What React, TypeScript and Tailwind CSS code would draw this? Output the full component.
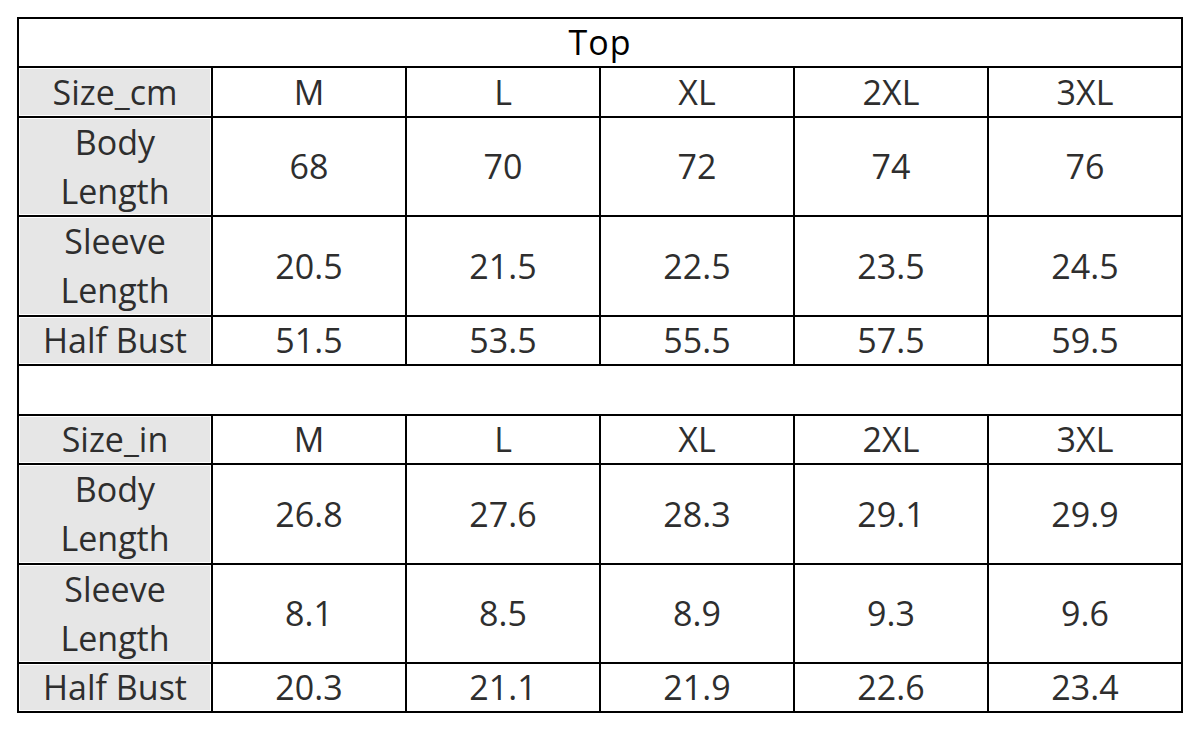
const rowsCm = [
  { label: ['Body', 'Length'], h: 'h-[97px]', values: ['68', '70', '72', '74', '76'] },
  { label: ['Sleeve', 'Length'], h: 'h-[98px]', values: ['20.5', '21.5', '22.5', '23.5', '24.5'] },
  { label: ['Half Bust'], h: 'h-[47px]', values: ['51.5', '53.5', '55.5', '57.5', '59.5'] },
];

const rowsIn = [
  { label: ['Body', 'Length'], h: 'h-[98px]', values: ['26.8', '27.6', '28.3', '29.1', '29.9'] },
  { label: ['Sleeve', 'Length'], h: 'h-[97px]', values: ['8.1', '8.5', '8.9', '9.3', '9.6'] },
  { label: ['Half Bust'], h: 'h-[47px]', values: ['20.3', '21.1', '21.9', '22.6', '23.4'] },
];

const sizes = ['M', 'L', 'XL', '2XL', '3XL'];

function LabelCell({ lines, h }: { lines: string[]; h: string }) {
  return (
    <div
      className={`${h} bg-[#e6e6e6] shadow-[inset_0_0_0_1px_#fff] flex flex-col items-center justify-center leading-[49px]`}
    >
      {lines.map((l) => (
        <span key={l}>{l}</span>
      ))}
    </div>
  );
}

function ValueCell({ value, h }: { value: string; h: string }) {
  return <div className={`${h} bg-white flex items-center justify-center`}>{value}</div>;
}

function Block({ unit, sizeH, rows }: { unit: string; sizeH: string; rows: typeof rowsCm }) {
  return (
    <>
      <LabelCell lines={[unit]} h={sizeH} />
      {sizes.map((s) => (
        <ValueCell key={s} value={s} h={sizeH} />
      ))}
      {rows.map((r) => (
        <div key={r.label.join()} className="contents">
          <LabelCell lines={r.label} h={r.h} />
          {r.values.map((v, i) => (
            <ValueCell key={i} value={v} h={r.h} />
          ))}
        </div>
      ))}
    </>
  );
}

export default function App() {
  return (
    <div className="w-[1200px] h-[731px] bg-white pt-[17px] pl-[17px] font-['Open_Sans','Noto_Sans',sans-serif] text-[#2e2e2e] text-[34px]">
      <div className="w-[1166px] grid grid-cols-[repeat(6,192px)] gap-[2px] p-[2px] bg-black">
        <div className="col-span-6 h-[47px] bg-white flex items-center justify-center text-black tracking-[1px]">
          Top
        </div>
        <Block unit="Size_cm" sizeH="h-[48px]" rows={rowsCm} />
        <div className="col-span-6 h-[48px] bg-white" />
        <Block unit="Size_in" sizeH="h-[47px]" rows={rowsIn} />
      </div>
    </div>
  );
}
